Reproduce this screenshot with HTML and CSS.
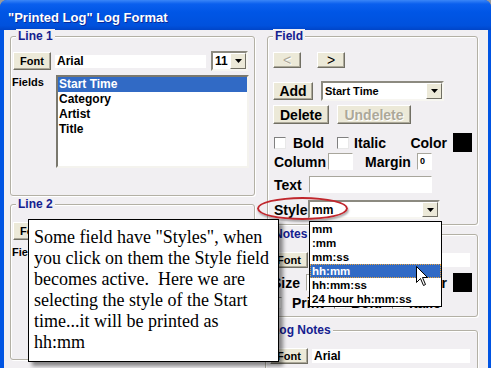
FILE: index.html
```
<!DOCTYPE html>
<html lang="en">
	<head>
		<meta charset="UTF-8" />
		<title>"Printed Log" Log Format</title>
		<link rel="stylesheet" href="styles.css">
	</head>
	<body>
		<div class="window">
			<div class="titlebar">"Printed Log" Log Format</div>
			<div class="client">
				<!-- Left column: Line 1 / Line 2 -->
				<div class="col-left">
					<div class="group line1">
						<div class="group-label">Line 1</div>
						<div class="font-row">
							<div class="btn btn-font">Font</div>
							<div class="font-name">Arial</div>
							<div class="combo size-combo">
								<span class="combo-text">11</span>
								<span class="combo-arrow"><svg width="7" height="4" viewBox="0 0 7 4"><path d="M0 0h7L3.5 4z" fill="#000"/></svg></span>
							</div>
						</div>
						<div class="fields-row">
							<div class="fields-label">Fields</div>
							<div class="listbox">
								<div class="item selected">Start Time</div>
								<div class="item">Category</div>
								<div class="item">Artist</div>
								<div class="item">Title</div>
							</div>
						</div>
					</div>

					<div class="group line2">
						<div class="group-label">Line 2</div>
						<div class="font-row font-row-2">
							<div class="btn btn-font">Font</div>
							<div class="font-name"></div>
							<div class="combo size-combo">
								<span class="combo-text"></span>
								<span class="combo-arrow"><svg width="7" height="4" viewBox="0 0 7 4"><path d="M0 0h7L3.5 4z" fill="#000"/></svg></span>
							</div>
						</div>
						<div class="fields-row">
							<div class="fields-label">Fields</div>
							<div class="listbox listbox-2"></div>
						</div>
					</div>
				</div>

				<!-- Right column: Field / Notes / Log Notes -->
				<div class="col-right">
					<div class="group field">
						<div class="group-label">Field</div>
						<div class="nav-row">
							<div class="btn btn-nav disabled">&lt;</div>
							<div class="btn btn-nav">&gt;</div>
						</div>
						<div class="add-row">
							<div class="btn btn-add">Add</div>
							<div class="combo field-combo">
								<span class="combo-text small">Start Time</span>
								<span class="combo-arrow"><svg width="7" height="4" viewBox="0 0 7 4"><path d="M0 0h7L3.5 4z" fill="#000"/></svg></span>
							</div>
						</div>
						<div class="del-row">
							<div class="btn btn-del">Delete</div>
							<div class="btn btn-undel disabled">Undelete</div>
						</div>
						<div class="check-row">
							<span class="check"></span>
							<span class="lbl lbl-bold">Bold</span>
							<span class="check check-italic"></span>
							<span class="lbl lbl-italic">Italic</span>
							<span class="lbl lbl-color">Color</span>
							<span class="swatch"></span>
						</div>
						<div class="col-row">
							<span class="lbl lbl-column">Column</span>
							<span class="input input-column"></span>
							<span class="lbl lbl-margin">Margin</span>
							<span class="input input-margin">0</span>
						</div>
						<div class="text-row">
							<span class="lbl lbl-text">Text</span>
							<span class="input input-text"></span>
						</div>
						<div class="style-row">
							<span class="lbl lbl-style">Style</span>
							<div class="combo style-combo">
								<span class="combo-text">mm</span>
								<span class="combo-arrow"><svg width="7" height="4" viewBox="0 0 7 4"><path d="M0 0h7L3.5 4z" fill="#000"/></svg></span>
							</div>
						</div>
					</div>

					<div class="group notes">
						<div class="group-label">Notes</div>
						<div class="notes-font-row">
							<div class="btn btn-font-sm">Font</div>
							<div class="font-name notes-name"></div>
						</div>
						<div class="size-row">
							<span class="lbl">Size</span>
							<span class="input input-size"></span>
							<span class="lbl lbl-color">Color</span>
							<span class="swatch"></span>
						</div>
						<div class="print-row">
							<span class="check checked">&#10003;</span>
							<span class="lbl lbl-print">Print</span>
							<span class="check"></span>
							<span class="lbl lbl-pbold">Bold</span>
							<span class="check"></span>
							<span class="lbl lbl-pitalic">Italic</span>
						</div>
					</div>

					<div class="group lognotes">
						<div class="group-label">Log Notes</div>
						<div class="notes-font-row">
							<div class="btn btn-font-sm">Font</div>
							<div class="font-name notes-name">Arial</div>
						</div>
					</div>
				</div>
			</div>

			<!-- overlays -->
			<div class="ring"></div>
			<div class="style-list">
				<div class="opt">mm</div>
				<div class="opt">:mm</div>
				<div class="opt">mm:ss</div>
				<div class="opt active">hh:mm</div>
				<div class="opt">hh:mm:ss</div>
				<div class="opt">24 hour hh:mm:ss</div>
			</div>
			<svg class="cursor" width="13" height="21" viewBox="0 0 13 21">
				<path d="M0.5 0.5V16.5L4.5 12.5L7.5 19.5L9.5 18.5L6.5 11.5H11.5Z" fill="#fff" stroke="#000"/>
			</svg>
			<div class="callout">
				Some field have "Styles", when<br>
				you click on them the Style field<br>
				becomes active.&nbsp; Here we are<br>
				selecting the style of the Start<br>
				time...it will be printed as<br>
				hh:mm
			</div>
		</div>
	</body>
</html>
```

FILE: styles.css
```
* {
	box-sizing: border-box;
}
body {
	margin: 0;
	background: #9a9a9a;
	font-family: "Liberation Sans", Arial, sans-serif;
}
.window {
	position: relative;
	width: 491px;
	height: 368px;
	overflow: hidden;
	background: #0054e3;
	border-radius: 7px 7px 0 0;
}
.titlebar {
	height: 30px;
	padding: 10px 0 0 8px;
	background: linear-gradient(#3a86f8 0, #0a5fee 4px, #0056e6 40%, #0051dd 85%, #0045c8 100%);
	color: #fff;
	font-size: 13px;
	font-weight: bold;
	line-height: 15px;
	text-shadow: 1px 1px #0a2a9a;
}
.client {
	display: flex;
	height: 338px;
	margin: 0 3px 0 4px;
	padding-left: 6px;
	background: #f1eff2;
}
.col-left {
	width: 245px;
}
.col-right {
	width: 213px;
	margin-left: 10px;
}

/* group boxes */
.group {
	border: 1px solid #b3b0a5;
	border-radius: 3px;
	box-shadow: inset 1px 1px #fff, 1px 1px #fff;
	padding: 0 2px;
}
.group-label {
	display: table;
	margin: -8px 0 0 3px;
	padding: 0 2px;
	background: #f1eff2;
	color: #14208f;
	font-size: 12px;
	font-weight: bold;
	line-height: 14px;
}
.line1 {
	margin-top: 6px;
	height: 160px;
}
.line2 {
	margin-top: 8px;
	height: 156px;
}

/* buttons */
.btn {
	display: flex;
	align-items: center;
	justify-content: center;
	background: #ece9d8;
	border: 1px solid;
	border-color: #fff #716f64 #716f64 #fff;
	box-shadow: inset -1px -1px #aca899;
	color: #000;
	font-weight: bold;
}
.btn.disabled {
	color: #aca899;
	text-shadow: 1px 1px #fff;
}

/* combo boxes */
.combo {
	display: flex;
	align-items: center;
	background: #fff;
	border: 2px solid;
	border-color: #8c8a80 #f7f6f1 #f7f6f1 #8c8a80;
}
.combo-text {
	flex: 1;
	padding-left: 2px;
	font-size: 12px;
	font-weight: bold;
	line-height: 14px;
}
.combo-text.small {
	font-size: 11px;
}
.combo-arrow {
	display: flex;
	align-items: center;
	justify-content: center;
	width: 16px;
	height: 100%;
	background: #ece9d8;
	border: 1px solid;
	border-color: #fff #716f64 #716f64 #fff;
}

/* Line 1 / Line 2 */
.font-row {
	display: flex;
	align-items: center;
	height: 20px;
	margin-top: 8px;
}
.font-row-2 {
	margin-top: 10px;
}
.btn-font {
	width: 38px;
	height: 18px;
	font-size: 11px;
}
.font-name {
	width: 151px;
	height: 13px;
	margin-left: 4px;
	padding-left: 2px;
	background: #fff;
	font-size: 12px;
	font-weight: bold;
	line-height: 13px;
}
.size-combo {
	width: 37px;
	height: 20px;
	margin-left: 5px;
}
.fields-row {
	display: flex;
	margin-top: 4px;
}
.fields-label {
	width: 44px;
	margin: 1px 0 0 -1px;
	font-size: 11px;
	font-weight: bold;
	line-height: 13px;
}
.listbox {
	width: 193px;
	height: 93px;
	background: #fff;
	border: 2px solid;
	border-color: #7a786e #f4f3ee #f4f3ee #7a786e;
}
.item {
	height: 15px;
	padding-left: 1px;
	font-size: 12px;
	font-weight: bold;
	line-height: 15px;
}
.item.selected {
	background: #316ac5;
	color: #fff;
}

/* Field */
.field {
	margin: 6px 0 0 2px;
	height: 189px;
	padding: 0 5px;
}
.field .group-label {
	margin-left: 0;
}
.nav-row {
	display: flex;
	gap: 16px;
	margin-top: 9px;
}
.btn-nav {
	width: 28px;
	height: 16px;
	font-size: 14px;
	font-weight: normal;
}
.add-row {
	display: flex;
	align-items: center;
	height: 20px;
	margin-top: 13px;
}
.btn-add {
	width: 40px;
	height: 18px;
	font-size: 14px;
}
.field-combo {
	width: 123px;
	height: 20px;
	margin-left: 8px;
}
.del-row {
	display: flex;
	gap: 8px;
	margin-top: 4px;
}
.btn-del {
	width: 56px;
	height: 19px;
	font-size: 14px;
}
.btn-undel {
	width: 74px;
	height: 19px;
	font-size: 14px;
}
.lbl {
	font-size: 14px;
	font-weight: bold;
	line-height: 16px;
	white-space: nowrap;
}
.check {
	display: inline-flex;
	align-items: center;
	justify-content: center;
	width: 12px;
	height: 12px;
	background: #fff;
	border: 1px solid;
	border-color: #808080 #e8e8e8 #e8e8e8 #808080;
	font-size: 10px;
	font-weight: bold;
	line-height: 10px;
}
.check-row {
	display: flex;
	align-items: center;
	height: 19px;
	margin-top: 9px;
}
.check-row .check {
	margin-left: 1px;
}
.lbl-bold {
	margin-left: 7px;
}
.check-row .check-italic {
	margin-left: 13px;
}
.lbl-italic {
	margin-left: 5px;
}
.lbl-color {
	margin-left: auto;
	margin-right: 6px;
}
.swatch {
	width: 19px;
	height: 19px;
	background: #000;
}
.input {
	height: 17px;
	background: #fff;
	border: 1px solid;
	border-color: #a8a69c #fff #fff #a8a69c;
	font-size: 9px;
	font-weight: bold;
	line-height: 15px;
	padding-left: 2px;
}
.col-row {
	display: flex;
	align-items: center;
	height: 17px;
	margin-top: 1px;
}
.lbl-column {
	width: 55px;
	padding-left: 1px;
}
.input-column {
	width: 25px;
}
.lbl-margin {
	margin-left: 12px;
	width: 52px;
}
.input-margin {
	width: 15px;
}
.text-row {
	display: flex;
	align-items: center;
	height: 17px;
	margin-top: 6px;
}
.lbl-text {
	width: 36px;
	padding-left: 1px;
}
.input-text {
	width: 123px;
}
.style-row {
	display: flex;
	align-items: center;
	height: 19px;
	margin-top: 7px;
}
.lbl-style {
	width: 35px;
	padding-left: 1px;
}
.style-combo {
	width: 132px;
	height: 19px;
}

/* Notes / Log Notes */
.notes {
	margin-top: 9px;
	height: 83px;
	padding: 0 5px 0 4px;
}
.notes .group-label {
	margin-left: 2px;
}
.lognotes .group-label {
	margin-left: 0;
}
.notes-font-row {
	display: flex;
	align-items: center;
	height: 17px;
	margin-top: 10px;
}
.btn-font-sm {
	width: 38px;
	height: 16px;
	font-size: 11px;
}
.notes-name {
	width: 158px;
	height: 14px;
	line-height: 14px;
}
.size-row {
	display: flex;
	align-items: center;
	height: 19px;
	margin-top: 5px;
	padding-left: 2px;
}
.input-size {
	width: 30px;
	margin-left: 6px;
}
.print-row {
	display: flex;
	align-items: center;
	height: 13px;
	margin-top: 4px;
	gap: 5px;
}
.lbl-print {
	margin: 0 5px 0 5px;
}
.lbl-pbold {
	margin-right: 5px;
}
.lognotes {
	margin-top: 13px;
	height: 60px;
	padding: 0 5px 0 4px;
}

/* overlays */
.ring {
	position: absolute;
	left: 257px;
	top: 197px;
	width: 91px;
	height: 23px;
	border: 2px solid #c0272d;
	border-radius: 50%;
	box-shadow: 1px 2px 2px rgba(0, 0, 0, 0.3);
}
.style-list {
	position: absolute;
	left: 309px;
	top: 221px;
	width: 133px;
	height: 86px;
	background: #fff;
	border: 1px solid #000;
}
.opt {
	height: 14px;
	padding-left: 2px;
	font-size: 11.5px;
	font-weight: bold;
	line-height: 14px;
	white-space: nowrap;
}
.opt.active {
	background: #316ac5;
	color: #fff;
	outline: 1px dotted #e8a33d;
	outline-offset: -1px;
}
.cursor {
	position: absolute;
	left: 416px;
	top: 266px;
}
.callout {
	position: absolute;
	left: 28px;
	top: 219px;
	width: 251px;
	height: 143px;
	padding: 7px 0 0 5px;
	background: #fff;
	border: 1px solid #000;
	box-shadow: 4px 4px 4px rgba(0, 0, 0, 0.45);
	font-family: "Liberation Serif", "Times New Roman", serif;
	font-size: 18px;
	line-height: 21px;
	white-space: nowrap;
}
```
